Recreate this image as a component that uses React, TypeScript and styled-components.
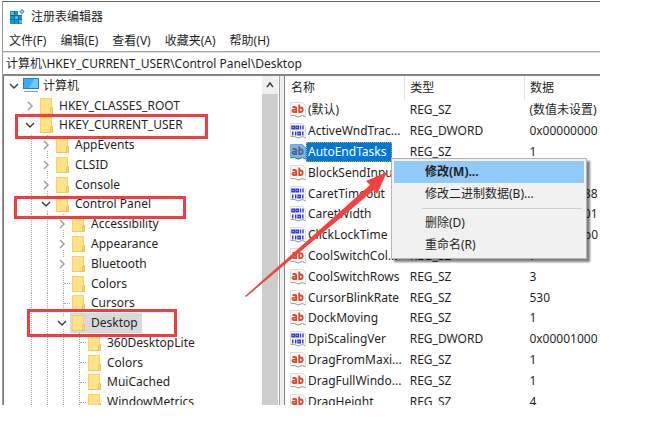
import React from "react";
import styled, { createGlobalStyle, css } from "styled-components";

const Global = createGlobalStyle`
  * { box-sizing: border-box; }
  body { margin: 0; background: #fff; overflow: hidden; }
  body, button, input, table {
    font-family: "Noto Sans", "Noto Sans CJK SC", sans-serif;
    font-size: 12px;
    line-height: 16px;
    color: #1f1f1f;
  }
  button { padding: 0; border: 0; background: none; text-align: left; }
  svg { flex: none; }
`;

const Desk = styled.div`
  position: relative;
  padding: 1px 48px 0 2px;
  overflow: hidden;
`;

const Frame = styled.main`
  display: flex;
  flex-direction: column;
  height: calc(100vh - 23px);
  overflow: hidden;
  border-top: 1px solid #666;
  border-left: 1px solid #999;
  background: #fff;
`;

const TitleBar = styled.header`
  display: flex;
  align-items: center;
  gap: 5px;
  height: 29px;
  padding-left: 6px;
`;

const Title = styled.h1`
  margin: 0;
  font-size: 12px;
  font-weight: 400;
`;

const MenuBar = styled.nav`
  display: flex;
  gap: 14px;
  height: 21px;
  padding-left: 6px;
  border-bottom: 1px solid #a3a3a3;
`;

const MenuButton = styled.button`
  height: 20px;
  white-space: nowrap;
`;

const AddressInput = styled.input`
  flex: none;
  width: 100%;
  height: 22px;
  padding: 0 3px 2px;
  border: 0;
  border-top: 1px solid #ddd;
  background: #fff;
  outline: 0;
`;

const Body = styled.div`
  display: flex;
  flex: 1;
  min-height: 0;
  border-top: 2px solid #858585;
`;

const TreePane = styled.section`
  display: flex;
  flex: 0 0 277px;
  border-left: 1px solid #777;
  border-right: 1px solid #a0a0a0;
  overflow: hidden;
`;

const Tree = styled.ul`
  display: grid;
  grid-auto-rows: 1fr;
  flex: 1;
  height: 336px;
  margin: 0;
  padding: 0 0 0 2px;
  list-style: none;
`;

const Row = styled.li`
  display: flex;
  align-items: stretch;
  min-height: 0;
`;

const Guide = styled.span<{ $line?: boolean; $stub?: boolean }>`
  display: flex;
  align-items: center;
  justify-content: center;
  flex: 0 0 16px;
  ${(p) =>
    p.$line &&
    css`
      background: repeating-linear-gradient(#aaa 0 1px, transparent 1px 2px) 9px 0 / 1px 100% no-repeat;
    `}
  ${(p) =>
    p.$stub &&
    css`
      &::after {
        content: "";
        width: 6px;
        margin-left: 10px;
        border-top: 1px dotted #aaa;
      }
    `}
`;

const Toggle = styled.button`
  display: flex;
  align-items: center;
  justify-content: center;
  width: 12px;
  height: 12px;
  background: #fff;
`;

const Key = styled.button<{ $selected: boolean; $root: boolean }>`
  display: flex;
  align-items: center;
  gap: ${(p) => (p.$root ? 4 : 5)}px;
  padding: 0 4px 0 ${(p) => (p.$root ? 1 : 2)}px;
  white-space: nowrap;
  background: ${(p) => (p.$selected ? "#d9d9d9" : "transparent")};
`;

const Scrollbar = styled.div`
  display: flex;
  flex-direction: column;
  flex: 0 0 17px;
  padding-right: 1px;
`;

const ScrollUp = styled.button`
  display: flex;
  align-items: center;
  justify-content: center;
  height: 18px;
  background: #f0f0f0;
`;

const Thumb = styled.div`
  flex: 1;
  background: #cdcdcd;
`;

const Splitter = styled.div`
  flex: 0 0 5px;
  background: #f0f0f0;
  border-right: 1px solid #858585;
`;

const ListPane = styled.section`
  flex: 1;
  min-width: 0;
  overflow: hidden;
`;

const ValueTable = styled.table`
  width: 100%;
  height: 336px;
  table-layout: fixed;
  border-collapse: collapse;
`;

const Head = styled.th<{ $first?: boolean }>`
  width: ${(p) => (p.$first ? "38%" : "auto")};
  height: 24px;
  padding: 0 0 0 ${(p) => (p.$first ? 6 : 5)}px;
  border-right: 1px solid #e5e5e5;
  font-weight: 400;
  text-align: left;
  &:last-child { border-right: 0; width: 24%; }
`;

const Cell = styled.td`
  padding: 0 0 0 5px;
  white-space: nowrap;
`;

const ValueName = styled.button`
  display: flex;
  align-items: center;
  white-space: nowrap;
`;

const NameText = styled.span<{ $selected?: boolean }>`
  padding: 2px 5px 2px 2px;
  color: ${(p) => (p.$selected ? "#fff" : "inherit")};
  background: ${(p) => (p.$selected ? "#0078d7" : "transparent")};
  outline: ${(p) => (p.$selected ? "1px dotted #d99a55" : "none")};
  outline-offset: -1px;
`;

const Highlight = styled.div<{ $x: number; $y: number; $w: number; $h: number }>`
  position: absolute;
  left: ${(p) => p.$x}px;
  top: ${(p) => p.$y}px;
  width: ${(p) => p.$w}px;
  height: ${(p) => p.$h}px;
  border: 3px solid #f23c3f;
  pointer-events: none;
`;

const Arrow = styled.svg`
  position: absolute;
  left: 244px;
  top: 172px;
  pointer-events: none;
`;

const ContextMenu = styled.div`
  position: absolute;
  left: 391px;
  top: 158px;
  width: 196px;
  padding: 2px;
  border: 1px solid #b5b5b5;
  background: #f1f1f1;
  box-shadow: 3px 3px 2px rgba(0, 0, 0, 0.5);
`;

const MenuItem = styled.button<{ $active?: boolean }>`
  display: block;
  width: 100%;
  height: 22px;
  padding-left: 31px;
  font-weight: ${(p) => (p.$active ? 700 : 400)};
  background: ${(p) => (p.$active ? "#91c9f7" : "transparent")};
`;

const Divider = styled.hr`
  height: 1px;
  margin: 3px 2px 3px 28px;
  border: 0;
  background: #d0d0d0;
`;

const AppIcon = () => (
  <svg width="17" height="16" viewBox="0 0 17 16" aria-hidden="true">
    <path d="M1 2h8v4h4v9H1z" fill="#1b96c9" />
    <path d="M2 3h3v3H2zM6 7h3v3H6zM10 11h3v3h-3z" fill="#45c0ea" />
    <path d="M5.500 2v13M9.500 6v9M1 6.500h12M1 10.500h12" stroke="#0d6c9e" strokeWidth="1" />
    <path d="M13 0l2.500 2.500L13 5.500l-2.500-3z" fill="#3c8fb8" />
    <path d="M13 1.500l1 1-1 1.500-1-1.500z" fill="#bfe9fa" />
  </svg>
);

const FolderIcon = () => (
  <svg width="14" height="16" viewBox="0 0 14 16" aria-hidden="true">
    <path d="M0 0h12v9l1 1v6H0z" fill="#f5d166" />
    <path d="M1 1h10v14H1z" fill="#ffe288" />
    <path d="M10.500 15v-4.500l2-1V15z" fill="#ffdd72" stroke="#edc24a" />
    <path d="M0 15h13v1H0z" fill="#f2ca5c" />
  </svg>
);

const ComputerIcon = () => (
  <svg width="16" height="15" viewBox="0 0 16 15" aria-hidden="true">
    <path d="M0 0h16v11H0z" fill="#2f7fb5" />
    <path d="M1 1h14v9H1z" fill="#36b0f2" />
    <path d="M11 1h4v9H6z" fill="#6accfa" />
    <path d="M1 13.500h14" stroke="#8d9aa3" />
  </svg>
);

const Chevron = ({ open, up }: { open?: boolean; up?: boolean }) => (
  <svg width="10" height="10" viewBox="0 0 10 10" fill="none" aria-hidden="true">
    <path
      d={up ? "M2 7l3-4 3 4" : open ? "M1 3l4 4 4-4" : "M3 1l4 4-4 4"}
      stroke={open || up ? "#404040" : "#a0a0a0"}
      strokeWidth="1.5"
    />
  </svg>
);

const ValueIcon = ({ binary, selected }: { binary: boolean; selected: boolean }) => (
  <svg width="16" height="16" viewBox="0 0 16 16" fill="none" aria-hidden="true">
    <path
      d="M.5.5h12l3 3V15l-3-1.500-4 1.500-4-1.500-4 .5z"
      fill={selected ? "#78b5e8" : "#fafafa"}
      stroke={selected ? "#6aa9da" : "#d9dddd"}
    />
    <path d="M1 13.500h3.500L8 15l4.500-1.500 3 1.500" stroke={selected ? "#3a7fb0" : "#94a8a6"} />
    {binary ? (
      <g stroke="#2d36e4" strokeWidth="1.400">
        <path d="M2 3.200h2.300v2.600H2zM6 3.200h2.300v2.600H6zM10.500 2.500v4M13 2.500v4M2.700 8.500v4M5.700 8.500v4M8 9.200h2.300v2.600H8zM12.800 8.500v4" />
      </g>
    ) : (
      <g stroke={selected ? "#56658f" : "#dc4a30"} strokeWidth="1.800">
        <path d="M2.500 5h2.300q1.400 0 1.400 1.300V10H3.700q-1.300 0-1.300-1.200T3.700 7.600h2.400" />
        <path d="M9.200 2.500V10h1.500q2 0 2-2.200t-2-2.300H9.200" />
      </g>
    )}
  </svg>
);

type Node = [label: string, level: number, state: "open" | "closed" | "leaf"];

const nodes: Node[] = [
  ["计算机", 0, "open"],
  ["HKEY_CLASSES_ROOT", 1, "closed"],
  ["HKEY_CURRENT_USER", 1, "open"],
  ["AppEvents", 2, "closed"],
  ["CLSID", 2, "closed"],
  ["Console", 2, "closed"],
  ["Control Panel", 2, "open"],
  ["Accessibility", 3, "closed"],
  ["Appearance", 3, "closed"],
  ["Bluetooth", 3, "closed"],
  ["Colors", 3, "leaf"],
  ["Cursors", 3, "leaf"],
  ["Desktop", 3, "open"],
  ["360DesktopLite", 4, "leaf"],
  ["Colors", 4, "leaf"],
  ["MuiCached", 4, "leaf"],
  ["WindowMetrics", 4, "leaf"],
];

const values: [name: string, type: string, data: string][] = [
  ["(默认)", "REG_SZ", "(数值未设置)"],
  ["ActiveWndTrac...", "REG_DWORD", "0x00000000"],
  ["AutoEndTasks", "REG_SZ", "1"],
  ["BlockSendInpu...", "REG_SZ", "0"],
  ["CaretTimeout", "REG_DWORD", "0x00001388"],
  ["CaretWidth", "REG_DWORD", "0x00000001"],
  ["ClickLockTime", "REG_DWORD", "0x000004b0"],
  ["CoolSwitchCol...", "REG_SZ", "7"],
  ["CoolSwitchRows", "REG_SZ", "3"],
  ["CursorBlinkRate", "REG_SZ", "530"],
  ["DockMoving", "REG_SZ", "1"],
  ["DpiScalingVer", "REG_DWORD", "0x00001000"],
  ["DragFromMaxi...", "REG_SZ", "1"],
  ["DragFullWindo...", "REG_SZ", "1"],
  ["DragHeight", "REG_SZ", "4"],
];

const TreeRow = ({ node: [label, level, state] }: { node: Node }) => (
  <Row>
    {Array.from({ length: level }, (_, i) => (
      <Guide key={i} $line={i > 0} />
    ))}
    <Guide $line={level > 1} $stub={state === "leaf"}>
      {state !== "leaf" && (
        <Toggle aria-label={`${state === "open" ? "折叠" : "展开"} ${label}`}>
          <Chevron open={state === "open"} />
        </Toggle>
      )}
    </Guide>
    <Key $selected={label === "Desktop"} $root={level === 0}>
      {level === 0 ? <ComputerIcon /> : <FolderIcon />}
      {label}
    </Key>
  </Row>
);

export default function App() {
  return (
    <Desk>
      <Global />
      <Frame>
        <TitleBar>
          <AppIcon />
          <Title>注册表编辑器</Title>
        </TitleBar>
        <MenuBar>
          {["文件(F)", "编辑(E)", "查看(V)", "收藏夹(A)", "帮助(H)"].map((m) => (
            <MenuButton key={m}>{m}</MenuButton>
          ))}
        </MenuBar>
        <AddressInput
          aria-label="地址"
          defaultValue={"计算机\\HKEY_CURRENT_USER\\Control Panel\\Desktop"}
        />
        <Body>
          <TreePane>
            <Tree>
              {nodes.map((n, i) => (
                <TreeRow key={i} node={n} />
              ))}
            </Tree>
            <Scrollbar>
              <ScrollUp aria-label="向上滚动">
                <Chevron up />
              </ScrollUp>
              <Thumb />
            </Scrollbar>
          </TreePane>
          <Splitter />
          <ListPane>
            <ValueTable>
              <thead>
                <tr>
                  <Head $first>名称</Head>
                  <Head>类型</Head>
                  <Head>数据</Head>
                </tr>
              </thead>
              <tbody>
                {values.map(([name, type, data]) => {
                  const selected = name === "AutoEndTasks";
                  return (
                    <tr key={name}>
                      <Cell>
                        <ValueName>
                          <ValueIcon binary={type === "REG_DWORD"} selected={selected} />
                          <NameText $selected={selected}>{name}</NameText>
                        </ValueName>
                      </Cell>
                      <Cell>{type}</Cell>
                      <Cell>{data}</Cell>
                    </tr>
                  );
                })}
              </tbody>
            </ValueTable>
          </ListPane>
        </Body>
      </Frame>
      <Highlight $x={15} $y={114} $w={193} $h={25} />
      <Highlight $x={14} $y={196} $w={172} $h={23} />
      <Highlight $x={27} $y={309} $w={150} $h={28} />
      <Arrow width="144" height="126" viewBox="0 0 144 126" aria-hidden="true">
        <path d="M1 124L126 13l-4-4 21-9-10 22-3-4L2 125z" fill="#f5403f" />
      </Arrow>
      <ContextMenu role="menu">
        <MenuItem role="menuitem" $active>修改(M)...</MenuItem>
        <MenuItem role="menuitem">修改二进制数据(B)...</MenuItem>
        <Divider />
        <MenuItem role="menuitem">删除(D)</MenuItem>
        <MenuItem role="menuitem">重命名(R)</MenuItem>
      </ContextMenu>
    </Desk>
  );
}
